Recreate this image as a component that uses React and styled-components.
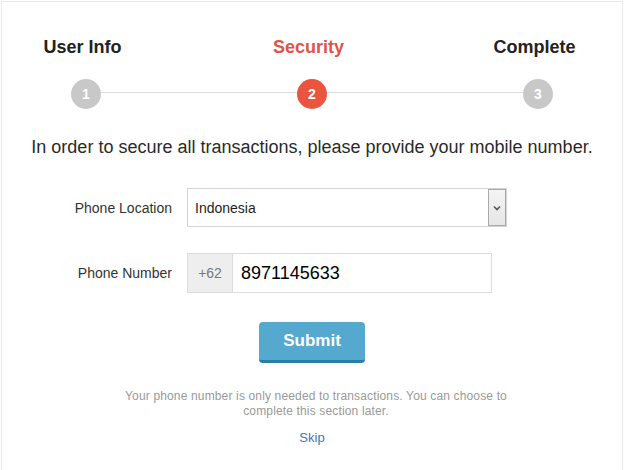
import styled, { createGlobalStyle } from "styled-components"

const GlobalStyle = createGlobalStyle`
    * { box-sizing: border-box; }
    body {
        margin: 0;
        padding: 1px;
        background: #fff;
        font-family: "Liberation Sans", Arial, sans-serif;
        color: #333;
    }
`

const Panel = styled.div`
    width: 622px;
    min-height: 480px;
    border: 1px solid #e9e9e9;
    background: #fff;
    padding: 35px 0 40px;
    display: flex;
    flex-direction: column;
    align-items: center;
`

const Stepper = styled.div`
    width: 100%;
    padding: 0 69px;
    display: flex;
`

const Step = styled.div`
    width: 30px;
    flex-shrink: 0;
    display: flex;
    flex-direction: column;
    align-items: center;
`

const StepTitle = styled.div`
    white-space: nowrap;
    font-size: 18px;
    line-height: 20px;
    font-weight: 700;
    margin-right: 7px;
    color: ${({ active }) => active ? "#e0534a" : "#222"};
`

const Circle = styled.div`
    margin-top: 22px;
    width: 30px;
    height: 30px;
    border-radius: 50%;
    background: ${({ active }) => active ? "#e9553f" : "#c8c8c8"};
    color: #fff;
    font-size: 14px;
    font-weight: 700;
    display: flex;
    align-items: center;
    justify-content: center;
`

const Connector = styled.div`
    flex: 1;
    height: 1px;
    background: #dcdcdc;
    align-self: flex-end;
    margin-bottom: 16px;
`

const Lead = styled.p`
    margin: 27px 0 0;
    font-size: 18px;
    line-height: 22px;
    color: #2a2a2a;
    text-align: center;
    white-space: nowrap;
`

const Form = styled.div`
    margin-top: 30px;
    width: 100%;
    display: flex;
    flex-direction: column;
    gap: 26px;
`

const Row = styled.div`
    display: flex;
    align-items: center;
    gap: 15px;
`

const Label = styled.label`
    width: 170px;
    text-align: right;
    font-size: 14px;
    color: #333;
`

const SelectBox = styled.div`
    width: 320px;
    height: 39px;
    border: 1px solid #d4d4d4;
    display: flex;
    align-items: stretch;
    background: #fff;
`

const SelectValue = styled.span`
    flex: 1;
    display: flex;
    align-items: center;
    padding-left: 7px;
    font-size: 14px;
    color: #1e1e1e;
`

const ArrowBox = styled.span`
    width: 18px;
    border: 1px solid #a9a9a9;
    background: linear-gradient(#f4f4f4, #e6e6e6);
    display: flex;
    align-items: center;
    justify-content: center;
`

const InputGroup = styled.div`
    width: 305px;
    height: 40px;
    display: flex;
    border: 1px solid #dcdcdc;
`

const Addon = styled.span`
    width: 45px;
    background: #eeeeee;
    border-right: 1px solid #dcdcdc;
    color: #777;
    font-size: 14px;
    display: flex;
    align-items: center;
    justify-content: center;
`

const PhoneValue = styled.span`
    flex: 1;
    display: flex;
    align-items: center;
    padding-left: 8px;
    font-size: 18px;
    color: #000;
`

const SubmitButton = styled.button`
    margin-top: 29px;
    width: 106px;
    height: 41px;
    border: none;
    border-bottom: 3px solid #2580a8;
    border-radius: 4px;
    background: #55a9cf;
    color: #fff;
    font-family: inherit;
    font-size: 17px;
    font-weight: 700;
    cursor: pointer;
`

const Help = styled.p`
    margin: 26px 0 0 8px;
    max-width: 400px;
    text-align: center;
    font-size: 12px;
    line-height: 15px;
    letter-spacing: 0.15px;
    color: #999;
`

const SkipLink = styled.a`
    margin-top: 11px;
    font-size: 13px;
    line-height: 16px;
    color: #3b78b4;
    text-decoration: none;
`

const steps = [
    { id: 1, title: "User Info" },
    { id: 2, title: "Security", active: true },
    { id: 3, title: "Complete" },
]

const App = () => {
    return (
        <>
            <GlobalStyle />
            <Panel>
                <Stepper>
                    {steps.map((step, i) => [
                        i > 0 && <Connector key={`c${step.id}`} />,
                        <Step key={step.id}>
                            <StepTitle active={step.active}>{step.title}</StepTitle>
                            <Circle active={step.active}>{step.id}</Circle>
                        </Step>,
                    ])}
                </Stepper>
                <Lead>In order to secure all transactions, please provide your mobile number.</Lead>
                <Form>
                    <Row>
                        <Label>Phone Location</Label>
                        <SelectBox>
                            <SelectValue>Indonesia</SelectValue>
                            <ArrowBox>
                                <svg width="8" height="6" viewBox="0 0 8 6">
                                    <path d="M1 1.5 L4 4.5 L7 1.5" fill="none" stroke="#555" strokeWidth="1.6" />
                                </svg>
                            </ArrowBox>
                        </SelectBox>
                    </Row>
                    <Row>
                        <Label>Phone Number</Label>
                        <InputGroup>
                            <Addon>+62</Addon>
                            <PhoneValue>8971145633</PhoneValue>
                        </InputGroup>
                    </Row>
                </Form>
                <SubmitButton>Submit</SubmitButton>
                <Help>Your phone number is only needed to transactions. You can choose to complete this section later.</Help>
                <SkipLink href="#">Skip</SkipLink>
            </Panel>
        </>
    )
}

export default App
